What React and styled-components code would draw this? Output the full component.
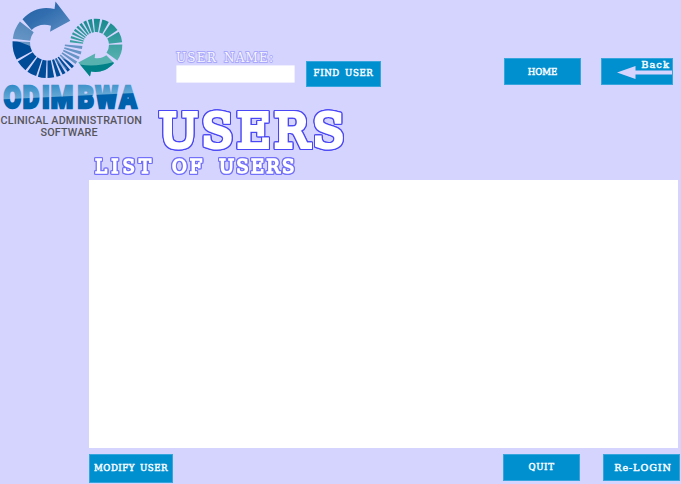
import React from "react";
import styled, { createGlobalStyle } from "styled-components";

const Global = createGlobalStyle`
  *{box-sizing:border-box}
  body{margin:0;background:#d5d4ff;overflow:hidden}
`;
const slab = `"DejaVu Serif", serif`;
const ring = c => `drop-shadow(1px 0 0 ${c}) drop-shadow(-1px 0 0 ${c}) drop-shadow(0 1px 0 ${c}) drop-shadow(0 -1px 0 ${c})`;

const Screen = styled.main`
  width:681px;height:484px;background:#d5d4ff;overflow:hidden;
  display:flex;flex-direction:column;font-family:${slab};
`;
const Header = styled.header`height:180px;display:flex;align-items:flex-start;`;
const LogoArt = styled.svg`width:150px;height:142px;flex:none;display:block;`;
const HeaderMain = styled.div`flex:1;min-width:0;display:flex;flex-direction:column;`;
const TopBar = styled.div`height:105px;display:flex;align-items:flex-start;`;
const Field = styled.label`
  width:119px;margin:50px 0 0 26px;display:flex;flex-direction:column;
`;
const FieldLabel = styled.span`
  height:15px;line-height:16px;font-size:12px;white-space:pre;color:#f6f5ff;
  letter-spacing:1.2px;word-spacing:2px;-webkit-text-stroke:1.8px #aaa8fb;paint-order:stroke fill;
`;
const Input = styled.input`
  width:119px;height:18px;border:1px solid #efeeff;background:#fff;padding:0 3px;outline:0;border-radius:1px;
`;
const Button = styled.button`
  flex:none;width:${p => p.$w}px;height:${p => p.$h}px;margin:${p => p.$m};padding:${p => p.$pad || "0"};
  border:1px solid #36a5dc;background:#008fcf;color:#f2faff;
  font:400 ${p => p.$size || 8.6}px/1 ${slab};letter-spacing:${p => p.$ls || 0}px;word-spacing:${p => p.$ws || 0}px;
  -webkit-text-stroke:.5px #f2faff;
  display:flex;align-items:center;justify-content:center;white-space:nowrap;
`;
const BackButton = styled(Button)`flex-direction:column;align-items:flex-end;justify-content:flex-start;`;
const BackLabel = styled.span`padding-right:2px;line-height:12px;height:11px;`;
const Arrow = styled.svg`width:55px;height:13px;display:block;margin-top:-4px;flex:none;`;
const Title = styled.h1`
  margin:0 0 0 9px;height:50px;font:400 46px/52px ${slab};letter-spacing:3.8px;color:#fff;
  -webkit-text-stroke:4px #fff;filter:${ring("#4a47f5")};
`;
const Subtitle = styled.h2`
  margin:0 0 0 -55px;height:25px;font:400 18px/23px ${slab};white-space:nowrap;display:flex;gap:15px;
  color:#fff;-webkit-text-stroke:1.5px #fff;filter:${ring("#7370fa")};
`;
const Word = styled.span`width:${p => p.$w}px;letter-spacing:${p => p.$ls}px;flex:none;`;
const UserList = styled.section`width:589px;height:268px;margin-left:89px;background:#fff;flex:none;`;
const Footer = styled.footer`height:36px;padding-left:89px;display:flex;align-items:flex-start;`;

const point = (cx, cy, r, a) => {
  const t = (a * Math.PI) / 180;
  return `${(cx + r * Math.cos(t)).toFixed(2)} ${(cy + r * Math.sin(t)).toFixed(2)}`;
};
const wedge = (cx, cy, R, r, a, b) =>
  `M${point(cx, cy, R, a)}A${R} ${R} 0 0 1 ${point(cx, cy, R, b)}L${point(cx, cy, r, b)}A${r} ${r} 0 0 0 ${point(cx, cy, r, a)}Z`;

const blueSegments = [[187,218],[152,183],[129,148],[109,125],[93,106],[79,90],[68,75],[59,64.5],[50,55],[41,46],[32,37],[23,28],[14,19],[5,10]];
const tealSegments = [[186,191],[195,200],[204,209],[213,218],[222,227],[231,237],[241,248],[252,261],[265,279],[284,299],[304,325],[330,354],[359,396]];

function Logo() {
  return (
    <LogoArt viewBox="0 0 150 142" role="img" aria-label="Odimbwa">
      <defs>
        <linearGradient id="arrow" x1="0" y1="0" x2="1" y2="1">
          <stop offset="0" stopColor="#2260a5" /><stop offset=".45" stopColor="#326eaf" /><stop offset="1" stopColor="#5d8ec3" />
        </linearGradient>
        <linearGradient id="blue" gradientUnits="userSpaceOnUse" x1="40" y1="20" x2="23" y2="64">
          <stop offset="0" stopColor="#4d82b9" /><stop offset=".58" stopColor="#6796c5" /><stop offset=".6" stopColor="#004b98" /><stop offset="1" stopColor="#004b98" />
        </linearGradient>
        <linearGradient id="teal" gradientUnits="userSpaceOnUse" x1="95" y1="18" x2="95" y2="63">
          <stop offset="0" stopColor="#15898e" /><stop offset="1" stopColor="#5cb4b1" />
        </linearGradient>
        <linearGradient id="word" gradientUnits="userSpaceOnUse" x1="50" y1="84" x2="51" y2="110">
          <stop offset="0" stopColor="#338cc6" /><stop offset=".5" stopColor="#65a8d5" /><stop offset=".54" stopColor="#0062ac" /><stop offset="1" stopColor="#0062ac" />
        </linearGradient>
      </defs>
      {blueSegments.map(([a, b]) => (
        <path key={a} d={wedge(47.5, 43, 35, 17.5, a, b)} fill={a < 40 ? "#6594c5" : "url(#blue)"} />
      ))}
      <path d="M54 60L57 59L67 68L66 70Z" fill="#6594c5" opacity=".45" />
      <path d="M22.5 19.2C32 9 43 6 54.5 9L55.5 1.5L70.3 20.7L50 31.7L51 25.7C43 23.5 36 25.5 31.7 30Z" fill="url(#arrow)" />
      {tealSegments.map(([a, b]) => <path key={a} d={wedge(96, 45, 26.3, 13, a, b)} fill="url(#teal)" />)}
      <path d="M78.3 62.4L95.2 53.5L94.7 58C100 59 104 57 106.3 55.3L114 63C107 71 98 73 91 71.5L90 76.5Z" fill="#56b2af" />
      <path d="M80 64.5C91 66.5 103 65 113 62.3L114 63C107 71 98 73 91 71.5L90 76.5Z" fill="#008087" />
      <g transform="scale(.8 1)">
        <text x="4.5 28.5 52.5 63.5 97 119.5 149" y="108" fontFamily="Roboto" fontWeight="900" fontSize="32" fill="url(#word)" stroke="url(#word)" strokeWidth="2.4">ODIMBWA</text>
      </g>
      <g fontFamily="Roboto" fontWeight="500" fontSize="10.8" fill="#55545a">
        <text x=".5" y="124.3" textLength="141.5" lengthAdjust="spacing">CLINICAL ADMINISTRATION</text>
        <text x="40.5" y="135.7" textLength="57" lengthAdjust="spacing">SOFTWARE</text>
      </g>
    </LogoArt>
  );
}

export default function App() {
  return (
    <Screen>
      <Global />
      <Header>
        <Logo />
        <HeaderMain>
          <TopBar>
            <Field><FieldLabel>USER NAME:</FieldLabel><Input aria-label="User name" /></Field>
            <Button $w={75} $h={26} $m="61px 0 0 11px" $pad="0 0 2px" $ls={.6} $ws={2}>FIND USER</Button>
            <Button $w={77} $h={27} $m="58px 0 0 123px" $pad="2px 0 0">HOME</Button>
            <BackButton $w={72} $h={27} $m="58px 0 0 20px" $size={9.8} $ls={1.1}>
              <BackLabel>Back</BackLabel>
              <Arrow viewBox="0 0 55 13"><path d="M0 6.5L18.5 0V4.5H55V8.5H18.5V13Z" fill="#d5d4ff" /></Arrow>
            </BackButton>
          </TopBar>
          <Title>USERS</Title>
          <Subtitle><Word $w={62} $ls={4.2}>LIST</Word>{" "}<Word $w={32} $ls={3}>OF</Word>{" "}<Word $w={80} $ls={2.2}>USERS</Word></Subtitle>
        </HeaderMain>
      </Header>
      <UserList aria-label="List of users" />
      <Footer>
        <Button $w={84} $h={29} $m="6px 0 0" $ls={.5} $ws={2}>MODIFY USER</Button>
        <Button $w={77} $h={27} $m="6px 0 0 330px" $ls={.7}>QUIT</Button>
        <Button $w={77} $h={27} $m="6px 0 0 23px" $size={9.6} $ls={.9} $pad="0 0 0 3px">Re-LOGIN</Button>
      </Footer>
    </Screen>
  );
}
